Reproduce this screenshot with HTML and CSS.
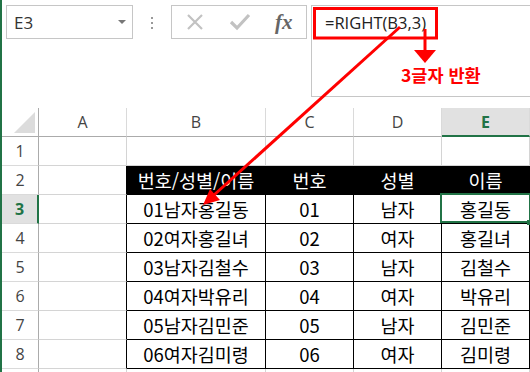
FILE: index.html
```html
<!DOCTYPE html>
<html lang="ko">
<head>
    <meta charset="UTF-8">
    <title>RIGHT 함수</title>
    <link rel="stylesheet" href="styles.css">
</head>
<body>
    <div class="sheet">
        <div class="toolbar">
            <div class="name-box">
                <span>E3</span>
                <span class="caret"></span>
            </div>
            <div class="dots"><i></i><i></i><i></i></div>
            <div class="buttons">
                <svg class="btn-icon" width="18" height="16" viewBox="0 0 18 16">
                    <path d="M2 1 L16 15 M16 1 L2 15" stroke="#c2c2c2" stroke-width="2.2" fill="none"/>
                </svg>
                <svg class="btn-icon" width="22" height="18" viewBox="0 0 22 18">
                    <path d="M2 9 L8 15 L20 2" stroke="#c2c2c2" stroke-width="3.2" fill="none"/>
                </svg>
                <span class="fx">fx</span>
            </div>
            <div class="formula-box">
                <span class="formula">=RIGHT(B3,3)</span>
            </div>
        </div>

        <div class="grid">
            <div class="corner"><span class="tri"></span></div>
            <div class="col-head">A</div>
            <div class="col-head">B</div>
            <div class="col-head">C</div>
            <div class="col-head">D</div>
            <div class="col-head active">E</div>

            <div class="row-head">1</div>
            <div class="cell"></div>
            <div class="cell"></div>
            <div class="cell"></div>
            <div class="cell"></div>
            <div class="cell"></div>

            <div class="row-head">2</div>
            <div class="cell edge"></div>
            <div class="cell th">번호/성별/이름</div>
            <div class="cell th">번호</div>
            <div class="cell th">성별</div>
            <div class="cell th">이름</div>

            <div class="row-head active">3</div>
            <div class="cell edge"></div>
            <div class="cell td">01남자홍길동</div>
            <div class="cell td">01</div>
            <div class="cell td">남자</div>
            <div class="cell td selected">홍길동</div>

            <div class="row-head">4</div>
            <div class="cell edge"></div>
            <div class="cell td">02여자홍길녀</div>
            <div class="cell td">02</div>
            <div class="cell td">여자</div>
            <div class="cell td">홍길녀</div>

            <div class="row-head">5</div>
            <div class="cell edge"></div>
            <div class="cell td">03남자김철수</div>
            <div class="cell td">03</div>
            <div class="cell td">남자</div>
            <div class="cell td">김철수</div>

            <div class="row-head">6</div>
            <div class="cell edge"></div>
            <div class="cell td">04여자박유리</div>
            <div class="cell td">04</div>
            <div class="cell td">여자</div>
            <div class="cell td">박유리</div>

            <div class="row-head">7</div>
            <div class="cell edge"></div>
            <div class="cell td">05남자김민준</div>
            <div class="cell td">05</div>
            <div class="cell td">남자</div>
            <div class="cell td">김민준</div>

            <div class="row-head">8</div>
            <div class="cell edge"></div>
            <div class="cell td">06여자김미령</div>
            <div class="cell td">06</div>
            <div class="cell td">여자</div>
            <div class="cell td">김미령</div>

            <div class="row-head"></div>
            <div class="cell"></div>
            <div class="cell"></div>
            <div class="cell"></div>
            <div class="cell"></div>
            <div class="cell"></div>
        </div>
    </div>

    <!-- red annotations drawn over the sheet -->
    <div class="notes">
        <svg width="530" height="372" viewBox="0 0 530 372">
            <rect x="314.5" y="8.5" width="122" height="29.5" fill="none" stroke="#ff0000" stroke-width="3"/>
            <line x1="425" y1="29" x2="425" y2="52" stroke="#ff0000" stroke-width="3"/>
            <polygon points="414,50 436,50 425,63" fill="#ff0000"/>
            <line x1="400" y1="27" x2="214" y2="195" stroke="#ff0000" stroke-width="3"/>
            <polygon points="203,205 210,189 220,200" fill="#ff0000"/>
        </svg>
        <div class="note-text">3글자 반환</div>
    </div>
</body>
</html>
```

FILE: styles.css
```css
* {
    margin: 0;
    padding: 0;
    box-sizing: border-box;
}
html, body {
    height: 100%;
}
body {
    position: relative;
    overflow: hidden;
    background: #fff;
    font-family: 'Open Sans', sans-serif;
}
.sheet {
    height: 100%;
    border-left: 2px solid #217346;
}

/* top bar */
.toolbar {
    display: flex;
    align-items: flex-start;
    height: 108px;
    padding-top: 5px;
}
.name-box {
    display: flex;
    align-items: center;
    justify-content: space-between;
    width: 127px;
    height: 34px;
    margin-left: 4px;
    padding: 0 6px 0 7px;
    border: 1px solid #c6c6c6;
    font-size: 17px;
    color: #333;
}
.caret {
    border-left: 4px solid transparent;
    border-right: 4px solid transparent;
    border-top: 4px solid #777;
}
.dots {
    display: flex;
    flex-direction: column;
    gap: 3px;
    margin: 12px 18px 0;
}
.dots i {
    display: block;
    width: 2px;
    height: 2px;
    background: #999;
}
.buttons {
    display: flex;
    align-items: center;
    width: 136px;
    height: 34px;
    padding-left: 14px;
    border: 1px solid #c6c6c6;
}
.btn-icon {
    display: block;
}
.btn-icon + .btn-icon {
    margin-left: 25px;
}
.fx {
    margin-left: 24px;
    font-family: 'Liberation Serif', serif;
    font-style: italic;
    font-weight: bold;
    font-size: 21px;
    color: #666;
}
.formula-box {
    flex: 1;
    height: 92px;
    margin-left: 4px;
    padding-left: 13px;
    border: 1px solid #c6c6c6;
    border-right: none;
}
.formula {
    display: block;
    line-height: 33px;
    font-size: 16.5px;
    color: #222;
}

/* worksheet */
.grid {
    display: grid;
    grid-template-columns: 37px 88px 139px 88px 88px 88px;
    grid-template-rows: 29px repeat(9, 29px);
}
.grid > div {
    display: flex;
    align-items: center;
    justify-content: center;
}
.corner {
    border-right: 1px solid #ababab;
    border-bottom: 1px solid #ababab;
    align-items: flex-end !important;
    justify-content: flex-end !important;
    padding: 0 3px 3px 0;
}
.tri {
    width: 0;
    height: 0;
    border-left: 21px solid transparent;
    border-bottom: 21px solid #dcdcdc;
}
.col-head {
    border-right: 1px solid #dadada;
    border-bottom: 1px solid #ababab;
    font-size: 16px;
    color: #444;
}
.col-head.active {
    background: #e1e1e1;
    border-bottom: 2px solid #217346;
    color: #217346;
    font-weight: bold;
}
.row-head {
    border-right: 1px solid #ababab;
    border-bottom: 1px solid #dadada;
    font-size: 16px;
    color: #444;
}
.row-head.active {
    background: #e1e1e1;
    border-right: 2px solid #217346;
    color: #217346;
    font-weight: bold;
}
.cell {
    border-right: 1px solid #d4d4d4;
    border-bottom: 1px solid #d4d4d4;
    font-family: 'Noto Sans CJK KR', sans-serif;
    font-size: 18.5px;
    color: #000;
}
.cell.edge {
    border-right-color: #000;
}
.cell.th {
    background: #000;
    border-color: #000;
    color: #fff;
}
.cell.td {
    border-color: #000;
}
.cell.selected {
    position: relative;
}
.cell.selected::after {
    content: '';
    position: absolute;
    top: -2px;
    left: -2px;
    right: -2px;
    bottom: 0;
    border: 2px solid #217346;
}
.cell.selected::before {
    content: '';
    position: absolute;
    left: 85px;
    bottom: -2px;
    width: 5px;
    height: 5px;
    background: #217346;
    z-index: 1;
}

/* annotations */
.notes {
    position: absolute;
    top: 0;
    left: 0;
    width: 530px;
    height: 372px;
    pointer-events: none;
}
.notes svg {
    display: block;
}
.note-text {
    position: absolute;
    left: 401px;
    top: 64px;
    font-family: 'Noto Sans CJK KR', sans-serif;
    font-weight: bold;
    font-size: 17.5px;
    line-height: 22px;
    color: #ff0000;
}
```
